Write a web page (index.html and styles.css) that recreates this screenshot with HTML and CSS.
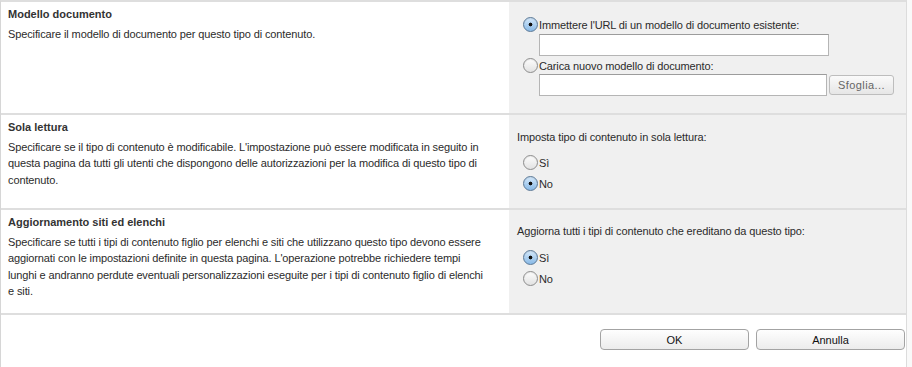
FILE: index.html
```html
<!DOCTYPE html>
<html>
    <head>
        <meta name="viewport" content="width=device-width, initial-scale=1.0">
        <title>Impostazioni tipo di contenuto</title>
        <link rel="stylesheet" href="styles.css">
    </head>
    <body>
        <div class="page">
            <div class="section s1">
                <div class="desc">
                    <h3>Modello documento</h3>
                    <p>Specificare il modello di documento per questo tipo di contenuto.</p>
                </div>
                <div class="ctrl">
                    <label class="opt"><input type="radio" name="tpl" checked><span>Immettere l'URL di un modello di documento esistente:</span></label>
                    <div class="field"><input type="text" class="box"></div>
                    <label class="opt"><input type="radio" name="tpl"><span>Carica nuovo modello di documento:</span></label>
                    <div class="field">
                        <input type="text" class="box">
                        <button class="browse">Sfoglia...</button>
                    </div>
                </div>
            </div>

            <div class="section s2">
                <div class="desc">
                    <h3>Sola lettura</h3>
                    <p>Specificare se il tipo di contenuto è modificabile. L'impostazione può essere modificata in seguito in questa pagina da tutti gli utenti che dispongono delle autorizzazioni per la modifica di questo tipo di contenuto.</p>
                </div>
                <div class="ctrl">
                    <p class="label">Imposta tipo di contenuto in sola lettura:</p>
                    <div class="choices">
                        <label class="opt"><input type="radio" name="ro"><span>Sì</span></label>
                        <label class="opt"><input type="radio" name="ro" checked><span>No</span></label>
                    </div>
                </div>
            </div>

            <div class="section s3">
                <div class="desc">
                    <h3>Aggiornamento siti ed elenchi</h3>
                    <p>Specificare se tutti i tipi di contenuto figlio per elenchi e siti che utilizzano questo tipo devono essere aggiornati con le impostazioni definite in questa pagina. L'operazione potrebbe richiedere tempi lunghi e andranno perdute eventuali personalizzazioni eseguite per i tipi di contenuto figlio di elenchi e siti.</p>
                </div>
                <div class="ctrl">
                    <p class="label">Aggiorna tutti i tipi di contenuto che ereditano da questo tipo:</p>
                    <div class="choices">
                        <label class="opt"><input type="radio" name="upd" checked><span>Sì</span></label>
                        <label class="opt"><input type="radio" name="upd"><span>No</span></label>
                    </div>
                </div>
            </div>

            <div class="footer">
                <button class="btn">OK</button>
                <button class="btn">Annulla</button>
            </div>
        </div>
    </body>
</html>
```

FILE: styles.css
```css
*{
    margin: 0;
    padding: 0;
    box-sizing: border-box;
}
body{
    background-color: #f9f9f9;
    font-family: "Liberation Sans", Arial, sans-serif;
    font-size: 11px;
    letter-spacing: -0.12px;
    color: #2b2b2b;
}
.page{
    width: 907px;
    height: 367px;
    background-color: #fff;
    border-top: 2px solid #dedede;
    border-left: 1px solid #d6d6d6;
    border-right: 1px solid #dcdcdc;
}
.section{
    display: grid;
    grid-template-columns: 508px 1fr;
    border-bottom: 2px solid #dedede;
}
.s1{
    height: 113px;
}
.s2{
    height: 95px;
}
.s3{
    height: 105px;
}
.desc{
    padding: 4px 20px 0 7px;
    line-height: 16.6px;
}
.desc h3{
    font-size: 11px;
    font-weight: bold;
    letter-spacing: 0;
    color: #333;
    margin-bottom: 3px;
}
.ctrl{
    background-color: #f0f0f0;
    padding: 14px 8px 0;
}
.s3 .ctrl{
    padding-top: 13px;
}
.label{
    line-height: 16px;
    margin-bottom: 7px;
}
.s3 .label{
    margin-bottom: 8px;
}
.opt{
    display: flex;
    align-items: center;
    height: 21px;
    padding-left: 6px;
}
.s1 .opt{
    height: 17px;
}
.opt span{
    margin-left: 1px;
}
.opt input{
    appearance: none;
    -webkit-appearance: none;
    width: 15px;
    height: 15px;
    border-radius: 50%;
    border: 1px solid #8c8c8c;
    background: linear-gradient(#fdfdfd, #e2e2e2);
    box-shadow: inset 0 1px 1px rgba(0,0,0,0.08);
    margin: 0;
}
.opt input:checked{
    border-color: #5a7896;
    background: radial-gradient(circle, #111 0 1.6px, transparent 2.2px), linear-gradient(#d5e9fb, #88b9e6);
}
.field{
    display: flex;
    gap: 2px;
    padding-left: 22px;
    margin: 1px 0 1px;
}
.s1 .field:last-child{
    margin-top: 0;
}
.box{
    width: 290px;
    height: 22px;
    border: 1px solid #b5b5b5;
    border-top-color: #9c9c9c;
    background-color: #fff;
    outline: 0;
}
.field .box + .browse{
    margin-top: 1px;
}
.field:last-child .box{
    width: 288px;
}
.browse{
    width: 65px;
    height: 20px;
    border: 1px solid #bdbdbd;
    border-radius: 3px;
    background: linear-gradient(#fafafa, #e6e6e6);
    font-family: "Liberation Sans", Arial, sans-serif;
    font-size: 11px;
    color: #666;
    letter-spacing: 0.4px;
}
.footer{
    display: flex;
    justify-content: flex-end;
    gap: 7px;
    padding: 14px 1px 0 0;
}
.btn{
    width: 149px;
    height: 21px;
    border: 1px solid #a3a3a3;
    border-radius: 4px;
    background: linear-gradient(#fefefe, #ececec);
    font-family: "Liberation Sans", Arial, sans-serif;
    font-size: 11px;
    color: #111;
}
```
